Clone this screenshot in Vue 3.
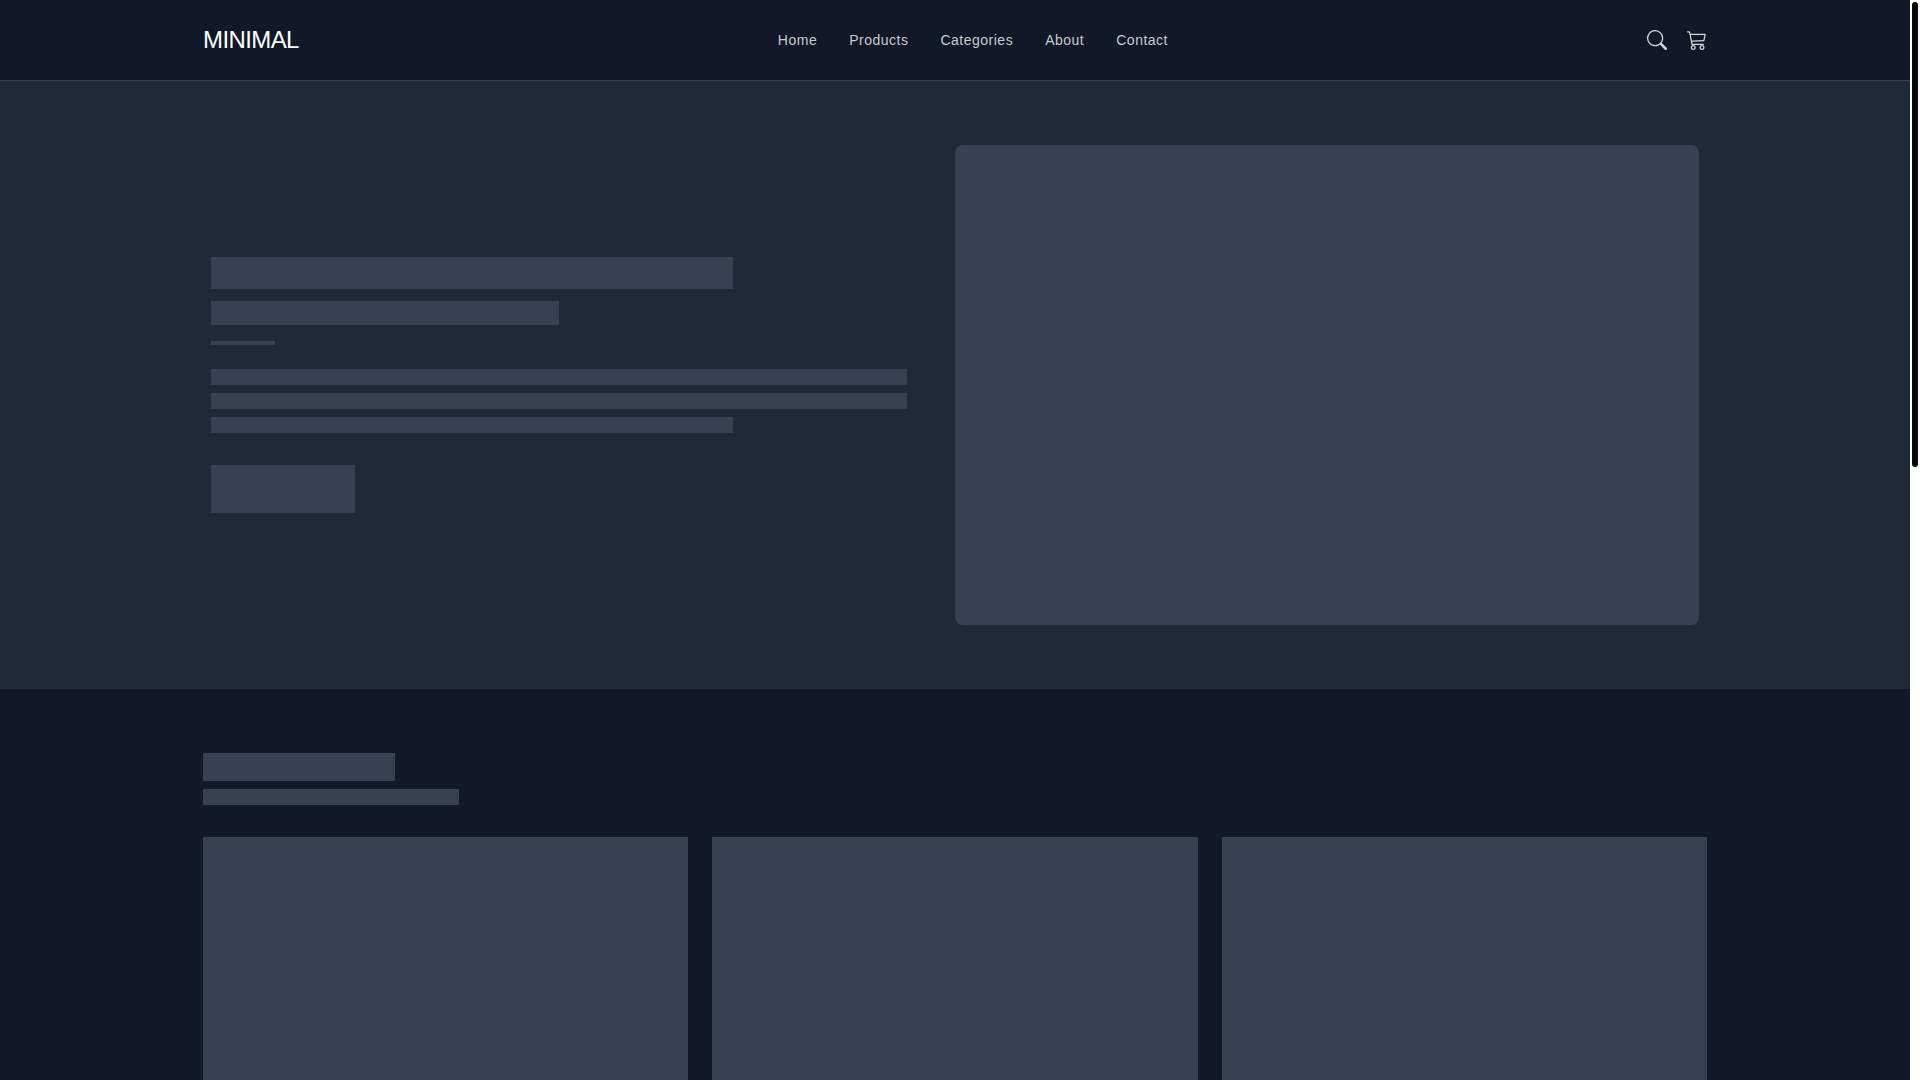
<template>
  <div class="shell">
    <div class="page">
      <header class="site-header">
        <div class="container header-row">
          <a class="logo" href="#">MINIMAL</a>

          <nav class="main-nav">
            <a v-for="item in navItems" :key="item" class="nav-link" href="#">{{ item }}</a>
          </nav>

          <div class="header-icons">
            <button class="icon-btn" type="button" aria-label="Search">
              <svg viewBox="0 0 16 16" width="20" height="20" fill="currentColor">
                <path d="M11.742 10.344a6.5 6.5 0 1 0-1.397 1.398h-.001c.03.04.062.078.098.115l3.85 3.85a1 1 0 0 0 1.415-1.414l-3.85-3.85a1.007 1.007 0 0 0-.115-.1zM12 6.5a5.5 5.5 0 1 1-11 0 5.5 5.5 0 0 1 11 0z" />
              </svg>
            </button>
            <button class="icon-btn" type="button" aria-label="Cart">
              <svg viewBox="0 0 16 16" width="20" height="20" fill="currentColor">
                <path d="M0 1.5A.5.5 0 0 1 .5 1H2a.5.5 0 0 1 .485.379L2.89 3H14.5a.5.5 0 0 1 .49.598l-1 5a.5.5 0 0 1-.465.401l-9.397.472L4.415 11H13a.5.5 0 0 1 0 1H4a.5.5 0 0 1-.491-.408L2.01 3.607 1.61 2H.5a.5.5 0 0 1-.5-.5zM3.102 4l.84 4.479 9.144-.459L13.89 4H3.102zM5 12a2 2 0 1 0 0 4 2 2 0 0 0 0-4zm7 0a2 2 0 1 0 0 4 2 2 0 0 0 0-4zm-7 1a1 1 0 1 1 0 2 1 1 0 0 1 0-2zm7 0a1 1 0 1 1 0 2 1 1 0 0 1 0-2z" />
              </svg>
            </button>
          </div>
        </div>
      </header>

      <!-- Hero skeleton -->
      <section class="hero">
        <div class="container hero-grid">
          <div class="hero-copy">
            <div class="bone hero-title"></div>
            <div class="bone hero-subtitle"></div>
            <div class="bone hero-rule"></div>
            <div class="hero-lines">
              <div class="bone line"></div>
              <div class="bone line"></div>
              <div class="bone line short"></div>
            </div>
            <div class="bone hero-button"></div>
          </div>
          <div class="hero-media">
            <div class="bone hero-image"></div>
          </div>
        </div>
      </section>

      <!-- Products skeleton -->
      <section class="products">
        <div class="container">
          <div class="bone products-title"></div>
          <div class="bone products-subtitle"></div>
          <div class="card-grid">
            <div v-for="n in 6" :key="n" class="card">
              <div class="bone card-image"></div>
              <div class="bone card-name"></div>
              <div class="bone card-price"></div>
            </div>
          </div>
        </div>
      </section>

      <section class="banner">
        <div class="container">
          <div class="bone banner-block"></div>
        </div>
      </section>

      <footer class="site-footer">
        <div class="container footer-grid">
          <div v-for="n in 4" :key="n" class="footer-col">
            <div class="bone footer-heading"></div>
            <div v-for="m in 4" :key="m" class="bone footer-line"></div>
          </div>
        </div>
      </footer>
    </div>

    <!-- Browser scrollbar as it shows in the shot -->
    <div class="scrollbar">
      <div class="scrollbar-thumb"></div>
    </div>
  </div>
</template>

<script setup>
const navItems = ["Home", "Products", "Categories", "About", "Contact"];
</script>

<style scoped>
.shell {
  display: flex;
  height: 100vh;
  overflow: hidden;
  font-family: "Liberation Sans", Arial, sans-serif;
}

.page {
  flex: 1;
  min-width: 0;
  overflow-y: auto;
  scrollbar-width: none;
  background: #111827;
}

.scrollbar {
  flex: none;
  width: 10px;
  box-sizing: border-box;
  padding: 2px;
  background: #ffffff;
}

.scrollbar-thumb {
  height: 465px;
  background: #0a0a0a;
  border-radius: 3px;
}

.container {
  max-width: 1536px;
  margin: 0 auto;
  padding: 0 16px;
  box-sizing: border-box;
}

.bone {
  background: #374151;
}

/* Header */
.site-header {
  background: #111827;
  border-bottom: 1px solid #374151;
}

.header-row {
  height: 80px;
  display: flex;
  align-items: center;
  justify-content: space-between;
}

.logo {
  font-size: 24px;
  line-height: 32px;
  letter-spacing: -0.6px;
  color: #ffffff;
  text-decoration: none;
}

.main-nav {
  display: flex;
  gap: 32px;
}

.nav-link {
  font-size: 14px;
  line-height: 20px;
  letter-spacing: 0.5px;
  color: #c6cad2;
  text-decoration: none;
}

.header-icons {
  display: flex;
  gap: 20px;
}

.icon-btn {
  display: flex;
  padding: 0;
  border: 0;
  background: none;
  color: #d1d5db;
}

/* Hero */
.hero {
  background: #1f2937;
  padding: 64px 0;
}

.hero-grid {
  display: grid;
  grid-template-columns: 1fr 1fr;
}

.hero-copy {
  padding: 0 48px 0 8px;
  display: flex;
  flex-direction: column;
  justify-content: center;
}

.hero-title {
  width: 75%;
  height: 32px;
}

.hero-subtitle {
  width: 50%;
  height: 24px;
  margin-top: 12px;
}

.hero-rule {
  width: 64px;
  height: 4px;
  margin-top: 16px;
}

.hero-lines {
  margin-top: 24px;
  display: flex;
  flex-direction: column;
  gap: 8px;
}

.line {
  height: 16px;
}

.line.short {
  width: 75%;
}

.hero-button {
  width: 144px;
  height: 48px;
  margin-top: 32px;
}

.hero-media {
  padding: 0 8px 0 0;
}

.hero-image {
  height: 480px;
  border-radius: 8px;
}

/* Products */
.products {
  padding: 64px 0;
}

.products-title {
  width: 192px;
  height: 28px;
}

.products-subtitle {
  width: 256px;
  height: 16px;
  margin-top: 8px;
}

.card-grid {
  margin-top: 32px;
  display: grid;
  grid-template-columns: repeat(3, 1fr);
  gap: 32px 24px;
}

.card-image {
  height: 400px;
}

.card-name {
  width: 75%;
  height: 20px;
  margin-top: 16px;
}

.card-price {
  width: 25%;
  height: 16px;
  margin-top: 8px;
}

/* Below the fold */
.banner {
  background: #1f2937;
  padding: 64px 0;
}

.banner-block {
  height: 180px;
}

.site-footer {
  border-top: 1px solid #374151;
  padding: 48px 0;
}

.footer-grid {
  display: grid;
  grid-template-columns: repeat(4, 1fr);
  gap: 32px;
}

.footer-col {
  display: flex;
  flex-direction: column;
  gap: 12px;
}

.footer-heading {
  width: 50%;
  height: 24px;
  margin-bottom: 8px;
}

.footer-line {
  width: 75%;
  height: 16px;
}
</style>
